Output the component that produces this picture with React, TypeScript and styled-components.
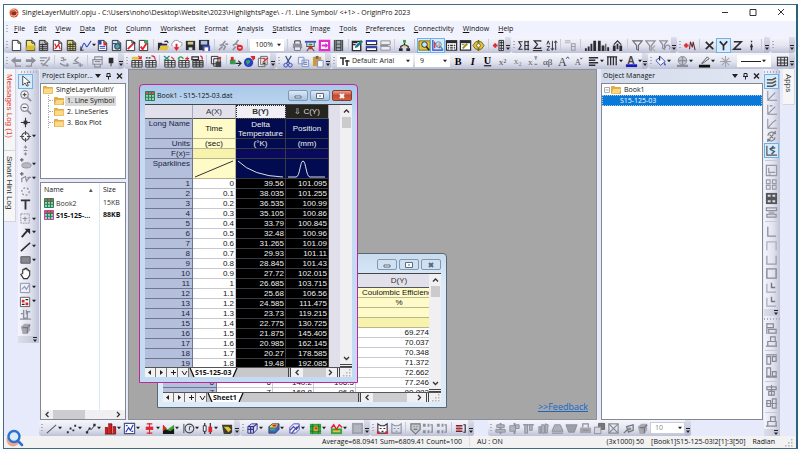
import React, { ReactNode } from "react";
import styled, { createGlobalStyle, css } from "styled-components";

const ui = `"Open Sans", "Noto Sans", sans-serif`;
const arial = `"Liberation Sans", Arial, sans-serif`;

const Global = createGlobalStyle`
  * { box-sizing: border-box; }
  html, body, #root { height: 100%; margin: 0; }
  body { background: #fdfdfd; font: 7px/10px ${ui}; color: #111; overflow: hidden; }
  button, select { font: inherit; color: inherit; border: 0; padding: 0; margin: 0; background: none; }
  table { border-collapse: separate; border-spacing: 0; }
  ul { list-style: none; margin: 0; padding: 0; }
`;

/* ---------- icon drawings, 14 x 14 grid ---------- */

const K = "#2b2b30";
const G = "#8d8f9b";
const R = "#e0252b";
const Y = "#e3c43c";
const B = "#2c3fc4";

const line = (d: string, c = K, w = 1.3) => <path d={d} stroke={c} strokeWidth={w} fill="none" />;
const fill = (d: string, c = K) => <path d={d} fill={c} />;
const page = (c = "#fff", s = K) => <path d="M2.5 1.5h6l3 3v8h-9z M8.5 1.5v3h3" fill={c} stroke={s} />;
const gridSheet = (c = K, f = "#fff") => (
  <>
    <path d="M2 6h11v7H2z" fill={f} stroke={c} />
    {line("M2 8.3h11M2 10.6h11M5.5 6v7M9.3 6v7", c, 1)}
  </>
);
const axes = (c = G) => line("M3 2v10h10M3 12l8-8", c, 1.1);

const art: Record<string, ReactNode> = {
  new: page(),
  folder: <>{page("#f4e36b")}{fill("M3 7h9l-1 5H2z", "#d9c12f")}</>,
  sheet: <>{page("#bbb")}{line("M3 6h8M3 8.300h8M3 10.500h8M6 5v7", K, 1)}</>,
  graph: <>{page()}{line("M4 5l2 4 2-3 2 5M4 11l5-6", R)}</>,
  matrix: <>{page("#dcd36a")}{line("M3 6h8M3 8h8M3 10.500h8M5.500 4v8M8.500 4v8", K, .9)}</>,
  wave: <>{line("M2 12l2-5c2-7 3 3 5 1l4-6", B, 1.1)}{line("M2 13V8M2 12h3", K, 1)}</>,
  layout: <>{page()}{fill("M3 2h3v4H3z", B)}{fill("M8 4h3v3H8z", R)}{line("M4 8h6M4 10h6", B, 1)}</>,
  notes: <>{page("#cfe3ea")}<circle cx="8" cy="8" r="3" fill="#4aa3b5" stroke={K} />{line("M3 5h4", B)}</>,
  pen: <>{page()}{line("M4 11l6-6", R, 2)}{line("M10 3l2 2", K, 1.6)}</>,
  check: <>{page()}{line("M4 8l2 3 4-6", R, 2)}{fill("M8 1h4v3H8z", "#3aa655")}</>,
  open: <>{fill("M1 4h4l1 1h5v2H4l-2 5H1z", K)}{fill("M4 7.500h9l-2 4.500H2z", Y)}{line("M8 3q3-2 4 1", K)}</>,
  cloud: <><path d="M3 8a2.500 2.500 0 010-4 4 4 0 017-1 2.500 2.500 0 011 5" fill="#fff" stroke={G} />{fill("M6 5h2v4h2l-3 4-3-4h2z", R)}</>,
  save: <>{fill("M2 2h10v10H2z", K)}{fill("M4 3h6v3H4z", "#c9cb7a")}{fill("M5 9h4v3H5z", "#ddd")}</>,
  saveAs: <>{fill("M1 1h11v11H1z", K)}{fill("M3 2h7v4H3z", "#a9c6e8")}{fill("M5 7h8v6H5z", "#3d4db5")}{fill("M7 9h4v4H7z", "#fff")}</>,
  run: <>{line("M9 2l-3 4 3 2-2 4M6 6L3 7M9 5l3 1M6 8l-4 4", G, 1.700)}</>,
  stop: <>{line("M8 1L5 5l3 2M5 5L2 7M5 8l-3 4", G, 1.700)}<circle cx="9.500" cy="9.500" r="3.300" fill={R} />{line("M8 9.500h3", "#fff")}</>,
  print: <>{fill("M2 5h10v5H2z", G)}{line("M4 5V2h6v3M4 9v3h6V9", K, 1)}{fill("M4 9h6v3H4z", "#e7e7ee")}</>,
  slide: <>{fill("M1 2h12v2H1z", "#3d4fc0")}{line("M3 4v4h8V4M7 8l-4 5M7 8l4 5", "#555", 1.100)}{fill("M5 5h4v2H5z", "#2f9a4f")}{fill("M5 8h4v3H5z", R)}</>,
  magenta: <><path d="M2 2h10v10H2z" fill="#fff" stroke="#e32cc9" strokeWidth="2.400" />{fill("M4 6h4V4l3 3-3 3V8H4z", "#e32cc9")}</>,
  film: <>{fill("M2 1h10v12H2z", "#3a3a3f")}{fill("M5 2h4v3H5zM5 6h4v3H5zM5 10h4v2H5z", "#9aa")}{line("M3.500 1v12M10.500 1v12", "#ccc", .6)}</>,
  edit: <><path d="M1.500 2.500h9v10h-9z" fill="#fff" stroke={K} strokeWidth="1.500" />{fill("M4 10l1-3 6-6 2 2-6 6z", "#1f7a86")}{line("M2 4h5M2 6h3", K)}</>,
  split: <><path d="M1.500 2h11v4h-11zM1.500 8.500h11v4h-11z" fill="#fff" stroke={K} strokeWidth="1.300" />{line("M1 2h12M1 9h12", B, 2)}</>,
  splitG: <><path d="M2 2h10v4H2zM2 8h10v4H2z" fill="#eee" stroke={G} />{line("M1 7h9", G, 1.500)}</>,
  tree: <>{line("M7 4v3M3 10V8l4-2 4 2v2", K)}{fill("M5.500 1h3v3h-3z", "#2e9e46")}{fill("M1 10h4v3H1zM9 10h4v3H9z", K)}{fill("M6 7h2v2H6z", Y)}</>,
  zoomPg: <>{fill("M1 2h12v10H1z", Y)}{line("M1 2h12v10H1z", "#776a1a", 1)}<circle cx="7" cy="6" r="3" fill="#bfe9f2" stroke={K} />{line("M9 8l3 4", K, 1.800)}</>,
  zoomGr: <>{line("M2 1v11h11", B)}{line("M4 10V4l3 4 2-4v6", R)}<circle cx="8" cy="6" r="3" fill="#d9f3fa99" stroke="#3b8fb5" />{line("M10 8l3 4", "#3b8fb5", 1.600)}</>,
  cal: <>{fill("M1 2h12v10H1z", "#fff")}{line("M1.500 2h11v10h-11z", K)}{fill("M1 1.500h12v3H1z", K)}{line("M3 7h8M3 9.500h8", K, 1.400)}<path d="M5 5v7M9 5v7" stroke="#fff" /></>,
  calPen: <>{fill("M1 2h12v10H1z", "#fff")}{line("M1.500 2h11v10h-11z", K)}{fill("M1 1.500h12v3H1z", K)}{line("M4 10l5-5", "#9a8f12", 2)}{line("M3 6h3", G)}</>,
  gear: <><path d="M1 7l3-4h6l3 4-3 4H4z" fill={Y} stroke="#6d6114" /><circle cx="7" cy="7" r="2" fill="#fff" stroke="#6d6114" />{line("M7 1v3M7 10v3", "#6d6114", 1.800)}</>,
  addCol: <>{line("M1 7h5M3.500 4.500v5", R, 2)}<path d="M7.500 1.500h5v11h-5z" fill="#ddd" stroke={K} />{line("M8 4h5M8 7h5M8 10h5M10 2v10", K, 1)}</>,
  sumCol: <>{line("M6 3H2l2.500 4L2 11h4", K, 1.200)}{line("M8 3h5M8 7h5M8 11h5M8.500 2v10M12 2v10", K, 1.200)}</>,
  sum: <>{line("M10.500 3V2h-7L7 6l-3.500 4h7V9", K, 1.300)}{line("M2 12.500h10", K, 1.200)}</>,
  sort: <>{line("M2 6l1.500-4L5 6M2 8h3l-3 4h3M8 2v10M6.500 10L8 12l1.500-2M11.500 12V2M10 4l1.500-2L13 4", K, 1)}</>,
  abc: <>{line("M1 2h6M1 4h6", "#b5b6c0", 1.200)}{line("M8 5h4v3H8zM8 8h4v4H8z", "#9a9ba5", 1.100)}</>,
  bars: fill("M1 10h2v3H1zM4 8h2v5H4zM7 5h2v8H7zM10 2h3v11h-3z"),
  bars2: fill("M1 2h3v11H1zM5 7h3v6H5zM9 5h1v8H9zM11 9h2v4h-2z"),
  bars3: <>{fill("M2 7h3v6H2zM6 5h2v6H6zM9 7h3v6H9z")}{line("M3 6l4-4 4 4", K, 1.200)}</>,
  funnel: line("M2 2h10L8 7v5l-2-1V7z", "#666872", 1.200),
  funnelX: <>{line("M2 2h10L8 7v5l-2-1V7z", G)}{line("M6 7l6 6M12 7l-6 6", "#aaa")}</>,
  funnelR: <>{line("M2 2h8L7 6v5l-2-1V6zM8 10a2.500 2.500 0 114 1", G)}</>,
  plusM: <>{line("M1 7h5M3.500 4.500v5", R, 2)}{line("M7 11l1-8 2 6 1-6 2 9", "#6a2328", 1.100)}</>,
  X: line("M3 3l8 8M11 3l-8 8", K, 1.800),
  Yl: line("M3 2.500L7 7l4-4.500M7 7v5", K, 1.800),
  Z: line("M3 3h8l-8 8h8", K, 1.700),
  i: line("M7 5v7M7 2v1.500M5.500 8h3", K, 1.500),
  back: <>{fill("M1 6l5-4v2.500h6v3H6V10z", G)}{line("M6 9v3h6", G)}</>,
  fwd: <>{fill("M13 6L8 2v2.500H2v3h6V10z", G)}{line("M8 9v3H2", G)}</>,
  sortX: line("M2 3h8M2 6h5M5 12l7-8M3 9l8 3M12 2v3", G, 1.400),
  ptA: line("M3 3h3v4M2 9l6 3M10 9v4M8 11h4M3 6l6-1", G, 1.400),
  ptB: line("M8 2L4 6l5 3M2 9h5M10 9v4M8 11h5", G, 1.400),
  prn2: <>{line("M2 5h10v5H2zM4 5V2h8v3M4 10v3h6v-3", G, 1.200)}{line("M4 7h6", G)}</>,
  pin: fill("M4 3h5v6H4zM6 9h1v3H6z"),
  tabA: <>{gridSheet()}{fill("M2 2h7v3H2z", Y)}{line("M9 1l3 3M12 1v3H9", R)}</>,
  tabB: <>{gridSheet()}{line("M2 3h2M5 3h2", K)}{line("M8 1q4 0 4 4", R)}</>,
  tabC: <>{gridSheet()}{line("M1 1l6 5M7 1L1 6", "#2d8d77", 1.400)}{line("M9 2l3 3", R)}</>,
  tabD: <>{gridSheet()}{line("M1 4q3-4 6 0M2 3v3", "#2e9e46", 1.400)}{line("M9 4h4M11 2v4", R)}</>,
  tabE: <>{gridSheet(K, "#bbb")}{line("M1 2h7v3H1z", K)}{line("M10 1q3 1 2 4", R)}</>,
  stack: <><path d="M1.500 1.500h7v8h-7z M4 4h7v8H4z" fill="#eee" stroke={K} />{fill("M6 7h6v6H6z", "#444")}{fill("M9 2h3v2H9z", R)}</>,
  out: <>{fill("M1 5h6v5H1z", "#2e9e46")}{line("M7 9h5M10 6l3 3-3 3", K, 1.200)}{fill("M2 2h3v4H2z", R)}</>,
  globe: <><circle cx="6" cy="8" r="5" fill={B} />{fill("M3 7q3-4 5 0l-3 4z", "#33a55c")}{fill("M8 1h5v3l-2 2z", R)}</>,
  pages: <><path d="M1.500 3.500h7v9h-7z M4 1.500h7v9H4z" fill="#f3f3f3" stroke="#666" />{line("M6 8l6-5M6 4h3", R, 1.200)}{line("M6 9h3", "#333")}</>,
  cut: <>{line("M5 9L10 1M8 9L4 1", "#3b4f7d", 1.300)}<circle cx="4" cy="11" r="2" fill="none" stroke={B} /><circle cx="9" cy="11" r="2" fill="none" stroke={B} /></>,
  copy: <><path d="M1.500 2.500h6v7h-6zM5.500 5.500h7v7h-7z" fill="#eaf0fb" stroke="#7c90c0" />{line("M7 8h4M7 10h4", "#7c90c0")}</>,
  paste: <>{fill("M1 2h9v10H1z", "#cf9a3d")}{fill("M4 1h3v3H4z", "#666")}<path d="M6 6h6v7H6z" fill="#f8f8ff" stroke="#7c90c0" /></>,
  bold: <text x="3" y="11" fontFamily="Liberation Serif" fontWeight="bold" fontSize="11">B</text>,
  italic: <text x="4" y="11" fontFamily="Liberation Serif" fontWeight="bold" fontStyle="italic" fontSize="11">I</text>,
  under: <text x="2" y="10" fontFamily="Liberation Serif" fontWeight="bold" fontSize="11" textDecoration="underline">U</text>,
  sup: <text x="2" y="11" fontFamily="Liberation Serif" fontSize="10" fill="#555">x²</text>,
  sub: <text x="2" y="10" fontFamily="Liberation Serif" fontSize="10" fill="#777">x₂</text>,
  both: <><text x="1" y="11" fontFamily="Liberation Serif" fontSize="10" fill="#666">x</text>{line("M8 2h3M8 10h3M9.500 2v3", "#888")}</>,
  greek: <text x="1" y="11" fontFamily="Liberation Serif" fontSize="10" fill="#444">αβ</text>,
  bigA: <><text x="1" y="12" fontFamily="Liberation Serif" fontSize="13" fill="#444">A</text>{line("M10 4l1.500-2L13 4", "#444", 1)}</>,
  smallA: <><text x="3" y="11" fontFamily="Liberation Serif" fontSize="9" fill="#555">A</text>{line("M9 3l1 1.500L11 3", "#555", 1)}</>,
  align: line("M2 3h10M2 5.700h7M2 8.400h10M2 11h7", K, 1.500),
  vlines: line("M2 2v9M5 2v9M8 2v9M11 2v9M1 2h11", K, 1.400),
  fontA: <><text x="2.500" y="10" fontFamily="Liberation Sans" fontWeight="bold" fontSize="11" fill="#444">A</text>{fill("M1 10h12v3H1z", "#1a1ab8")}</>,
  bucket: <><path d="M2 6l5-4 5 5-5 4z" fill="#f5f5f5" stroke={B} />{line("M6 1v5", K)}{fill("M11 7l2 4h-2z", B)}</>,
  shade: <><circle cx="7" cy="6" r="4.500" fill="#c3c4cc" stroke={G} />{line("M2 6h10M7 2v8", G)}{fill("M1 10.500h12v2.500H1z", G)}</>,
  pencil: <>{line("M4 9l6-7 2 2-7 5z", "#555", 1)}{fill("M1 10.500h12v3H1z", "#111")}</>,
  burst: line("M7 1v12M1 7h12M3 3l8 8M11 3l-8 8", "#a2a3ad", 1.200),
  table: line("M1.500 2.500h11v9h-11zM1 5.500h12M1 8.500h12M5.200 2v10M9 2v10", "#333", 1.100),
  pointer: <path d="M4 1v10l2.500-2.500L8.500 12l1.500-.7L8.500 8H12z" fill="#fff" stroke="#444" />,
  zin: <><circle cx="6" cy="6" r="4" fill="#f8f8f8" stroke={G} strokeWidth="1.400" />{line("M9 9l4 4", G, 2)}{line("M4 6h4M6 4v4", "#555")}</>,
  zout: <><circle cx="6" cy="6" r="4" fill="#f8f8f8" stroke={G} strokeWidth="1.400" />{line("M9 9l4 4", G, 2)}{line("M4 6h4", "#555")}</>,
  cross: <>{line("M7 2v10M2 7h10", "#333", 1.200)}{fill("M5 5h4v4H5z", "#333")}</>,
  target: <><circle cx="7" cy="7" r="4" fill="none" stroke="#444" strokeWidth="1.200" />{line("M7 1v12M1 7h12", "#444", 1)}<circle cx="7" cy="7" r="1.500" fill="#fff" /></>,
  updn: fill("M7 1l2 3H7.500v1h-1V4H5zM7 13l2-3H7.500V9h-1v1H5zM5 6.500h4v1H5z", G),
  blob: <>{line("M3 1v4M1 3h4", "#666")}<ellipse cx="8" cy="9" rx="5" ry="2.800" fill="#b7b9c2" stroke={G} /></>,
  curve: <>{line("M3 1v4M1 3h4", "#666")}{line("M3 12V8l4-2 1 5 4-5M9 7h4", G)}</>,
  dots: <circle cx="7" cy="7" r="4" fill="none" stroke={G} strokeDasharray="2 2" strokeWidth="1.400" />,
  T: line("M2 2.500h10M7 2.500v10", "#333", 2),
  region: <><path d="M2 2h9v10H2z" fill="none" stroke={G} strokeDasharray="2 1" />{line("M4 7h5M6.500 5v5", G)}</>,
  arrow: <>{line("M3 12l6-7", K, 2)}{fill("M6 3h6v6z", K)}</>,
  lineT: line("M2 12L12 3", K, 1.700),
  rect: <path d="M2 4h10v7H2z" fill="#868793" stroke="#555" />,
  hand: <path d="M4 7V3h1.500V2H7V1.500h1.500V3H10v1h1.500v5L9 12.500H5L2 8z" fill="#fff" stroke="#333" strokeWidth="1.200" />,
  pic: <><path d="M1.500 2.500h10v10h-10z" fill="#eef" stroke={G} />{line("M3 9l3-3 2 3 3-5", "#8aa0b5")}</>,
  picR: <><path d="M1.500 2.500h10v10h-10z" fill="#fff" stroke="#555" />{fill("M3 5h3v3H3zM7 8h3v3H7z", R)}{line("M7 5h3M3 10h3", "#222")}</>,
  handG: line("M2 6h3v5h4V4h3M5 2v4M8 2v5M1 12h12", G, 1.500),
  cube: <>{fill("M2 5l4-3h6v7l-3 4H4z", "#a6a7b0")}{line("M4 6h5v6M9 6l3-3", "#777")}</>,
  scatter: fill("M2 10h2v2H2zM5 6h2v2H5zM8 8h2v2H8zM10 3h2v2h-2z"),
  lineSym: <>{line("M3 11l3-4 2 1 4-5", K, 1)}{fill("M2 10h2.500v2.500H2zM5 6h2v2H5zM10 2h2.500v2.500H10z")}</>,
  thin: line("M2 12L12 3", "#555", 1.100),
  redBar: <>{fill("M1 6h3v7H1zM4.500 2h4v11h-4zM9.500 5h3v8h-3z", "#d21c1c")}{line("M1 6h3v7M4.500 2h4v11M9.500 5h3v8H1", "#5a0b0b", .8)}</>,
  scMat: <><path d="M1.500 1.500h11v11h-11z" fill="#fff" stroke="#4a5380" strokeWidth="1.200" />{line("M3 11l3-5 2 3 3-6M3 4h2M9 10h2", B)}</>,
  box: <>{line("M7 1v12M4 2h6M4 12h6", R, 1.200)}{fill("M3 5h8v3.500H3z", R)}</>,
  area: <>{fill("M1 3l5 5 3-2 4-3v10H1z", "#3c9f2c")}{fill("M1 7l5 2 3 1 4-3v6H1z", "#161616")}{fill("M1 3l4 4-4 3z", R)}</>,
  polar: <><circle cx="8" cy="7" r="4.700" fill="none" stroke="#444" strokeWidth="1.200" />{line("M2 2v10M8 9V5h2", "#444", 1)}</>,
  candle: <>{line("M4 1v12M10 1v12", K)}<path d="M2.500 4h3v6h-3z" fill="#fff" stroke={K} />{fill("M8 5h4v6H8z", R)}</>,
  tmpl: <>{fill("M1 3h11v8l-2 2H3z", "#3e3e2a")}{fill("M3 5h5l3 3-3 3z", Y)}</>,
  cube3: <><path d="M2 5l4-3h6v6l-4 4H2z" fill="#dcdcf4" stroke="#33348a" />{line("M2 5h6v7M8 5l4-3M5 5v7M2 8h6", "#33348a")}</>,
  surf: <>{fill("M2 5l4-3h7v6l-4 4H2z", "#3b5fd1")}{fill("M3 4l3-2h6l-2 4H3z", "#f0dd3c")}{fill("M6 3h4v2H6z", R)}{fill("M3 7h6v2H3z", "#41b347")}{line("M2 5l4-3h7v6l-4 4H2z", "#333", .8)}</>,
  wire: <><path d="M2 6l4-4h6v6l-4 4H2z" fill="#eeeefc" stroke="#4448aa" />{line("M2 9l4-4 3 3 3-4M4 12l6-7", "#4448aa")}</>,
  heat: <>{fill("M1 2h12v11H1z", "#32a53e")}{fill("M5 4h5v6H5z", Y)}{fill("M6 6h3v2H6z", R)}{line("M4 2v11M10 2v11M1 5h12M1 10h12", "#195e22", .6)}</>,
  heat2: <>{fill("M1 7h12v6H1z", "#32a53e")}{line("M1 7l3-4 3 5 3-5 3 3", R, 1.500)}{fill("M3 9h8v2H3z", Y)}</>,
  img: <>{fill("M1 1h12v12H1z", "#9ea0ac")}{fill("M3 3h8v8H3z", "#b3b5bf")}</>,
  mask: <><path d="M2 2l3 2h4l3-2v10H2z" fill="#fff" stroke={K} strokeWidth="1.200" />{line("M4 7h2M8 7h2M6 10h2", K)}{fill("M1 10h3v3H1zM10 10h3v3h-3z", R)}</>,
  maskG: <>{line("M2 2l3 2h4l3-2v10H2zM4 7h2M8 7h2M6 10h2", G, 1.200)}</>,
  shield: <path d="M2 2h10v6l-5 5-5-5z M5 5h1M8 5h1M5 8h4" fill="#c6c7d0" stroke="#777" strokeWidth="1.200" />,
  nodes: <>{fill("M1 2h3v3H1zM1 9h3v3H1zM6 2h2v3H6zM6 9h2v3H6z", G)}{line("M9 3h2v8H9", G, 1.400)}</>,
  redLines: <>{line("M1 4h7M1 7h7M1 10h7", "#70242a", 1.600)}{line("M9 3h2v8H9", K, 1.200)}{fill("M2 6h4v2H2z", R)}</>,
  al1: <>{fill("M6 1h2v12H6z", G)}<path d="M3 3h8v3H3zM2 8h10v3H2z" fill="#b4b5be" stroke={G} /></>,
  al2: <>{fill("M6 1h2v12H6z", G)}<path d="M2 4h6v6H2zM8 3h4v4H8z" fill="#b4b5be" stroke={G} /></>,
  al3: <>{line("M1 3h12", G)}<path d="M3 3h3v9H3zM8 3h3v6H8z" fill="#b4b5be" stroke={G} /></>,
  al4: <path d="M2 5h2v7H2zM5 3h3v9H5zM9 2l3 1-1 9H9z" fill="#b4b5be" stroke={G} />,
  trap: <><path d="M4 3h6l3 7H1z" fill="#b0b1ba" stroke={G} />{line("M1 12h12", G)}</>,
  trap2: <path d="M1 3h12l-3 8H4z" fill="#9d9ea8" stroke={G} />,
  cabinet: <>{fill("M1 6h12v6H1z", "#a4a5af")}{line("M4 6V2h6v4M4 9h6", G)}</>,
  over: <><path d="M6 1.500h6.500V8H6z" fill="#777" stroke="#666" /><path d="M1.500 5.500h7v7h-7z" fill="#d4d5dd" stroke={G} /></>,
  fit: <>{line("M2 2h10v10H2z", G)}{line("M2 2l10 10M12 2L2 12", "#888")}</>,
  front: <>{line("M2 12l5-5M5 5l7-2v6l-5 2z", "#777", 1.400)}{fill("M6 6h4v3H6z", G)}</>,
  ax1: axes(),
  ax2: <>{axes()}{line("M5 3h3", G)}</>,
  ax3: <>{line("M3 2v10h10M3 12l5-6 4-3", G, 1.100)}</>,
  swap: <>{line("M3 6a4.500 4.500 0 018-2M11 8a4.500 4.500 0 01-8 2M11 1v3H8M3 13v-3h3M5 5l4 4M9 5L5 9", "#777", 1.200)}</>,
  speed: <>{line("M2 2v10h11", "#555")}{line("M9 2l-3 4 4 2-3 3M5 5l6-1", "#445c74", 1.600)}</>,
  layers: <>{line("M2 5h6l4-2M2 8.500h6l4-2M2 12h6l4-2", "#555", 1.600)}</>,
  frame: line("M1.500 1.500h11v11h-11zM4 4v5h7M4 11h2", "#999aa5", 1.300),
  four: line("M1.500 2h4v4h-4zM8 2h4v4H8zM1.500 8h4v4h-4zM8 8h4v4H8z", "#9a9ba6", 1.200),
  fourK: <>{fill("M1 1h12v12H1z", "#55565c")}{fill("M3 3h3v2H3zM8 3h3v2H8zM3 9h3v2H3zM8 9h3v2H8z", "#ddd")}</>,
  mix: <>{line("M1.500 2h11v3h-11zM2 9h10v3H2z", "#8e8f9a", 1.300)}{fill("M4 6h6v4H4z", "#aaabb5")}</>,
  L: line("M3 2v10h9", G, 1.400),
  Lt: line("M2 12V3h10v9", "#b0b1bc", 1.400),
  U: line("M2 3v9h10V3", "#9d9ea9", 1.400),
  sq: line("M2 2h10v10H2z", "#888994", 1.500),
  inner: <>{line("M2 3v9h10", "#a8a9b4")}{line("M7 2v5h4", "#777", 1.500)}</>,
  g1: line("M2 2h7v4H2zM4 8h8v4H4zM2 1v12", "#888994", 1.300),
  g2: line("M3 7h9v5H3zM6 2h5v5H6zM1 12h12", "#888994", 1.300),
  g3: line("M1 2h12M2 4h4v8H2zM8 4h4v5H8z", "#888994", 1.300),
  g4: line("M1 12h12M2 2h4v9H2zM8 6h4v5H8z", "#888994", 1.300),
  g5: line("M2 3h10v3H2zM4 8h6v4H4zM7 1v12", "#888994", 1.300),
  g6: line("M2 4h4v6H2zM8 2h4v10H8zM1 7h12", "#888994", 1.300),
};

const Icon = ({ name }: { name: string }) => (
  <svg width="13" height="13" viewBox="0 0 14 14" aria-hidden="true">{art[name]}</svg>
);

/* ---------- toolbars ---------- */

const Band = styled.div<{ $w?: number }>`
  display: flex;
  align-items: stretch;
  flex: 0 1 ${p => (p.$w ? `${p.$w}px` : "auto")};
  height: 16px;
  min-width: 0;
  border-radius: 3px;
  background: linear-gradient(#f5f6fc, #e2e4f0 55%, #bdc1d4);
`;
const Grip = styled.i<{ $flat?: boolean }>`
  flex: none;
  width: ${p => (p.$flat ? "16px" : "2px")};
  height: ${p => (p.$flat ? "2px" : "auto")};
  margin: ${p => (p.$flat ? "2px auto 1px" : "4px 2px")};
  background: ${p => p.$flat
    ? "repeating-linear-gradient(90deg, #aaaebf 0 1px, transparent 1px 3px)"
    : "repeating-linear-gradient(#aaaebf 0 1px, transparent 1px 3px)"};
`;
const Items = styled.div`
  flex: 1;
  display: flex;
  align-items: center;
  justify-content: space-between;
  min-width: 0;
`;
const More = styled.button`
  flex: none;
  width: 6px;
  display: flex;
  align-items: flex-end;
  justify-content: center;
  padding-bottom: 3px;
  border-radius: 0 3px 3px 0;
  background: linear-gradient(#dcdeea, #b4b7ce);
`;
const Rule = styled.i<{ $flat?: boolean }>`
  flex: none;
  ${p => p.$flat
    ? css`height: 1px; width: 12px; margin: 2px 0;`
    : css`width: 1px; height: 12px; margin: 0 2px;`}
  background: #c6c9d9;
`;
const Tool = styled.button<{ $on?: boolean }>`
  flex: none;
  display: flex;
  align-items: center;
  svg { display: block; }
  ${p => p.$on && css`background: #d8ebfb; box-shadow: 0 0 0 1px #6cb2ea;`}
`;
const Combo = styled.label<{ $w: number; $dim?: boolean }>`
  flex: none;
  display: flex;
  align-items: center;
  width: ${p => p.$w}px;
  height: 12px;
  padding: 0 2px;
  background: #fff;
  color: ${p => (p.$dim ? "#888" : "#222")};
  border: 1px solid ${p => (p.$dim ? "#c9ccda" : "#fff")};
  select { appearance: none; flex: 1; min-width: 0; line-height: 10px; height: 10px; outline: 0; padding-left: 2px; }
`;

const Caret = ({ w = 5 }: { w?: number }) => (
  <svg width={w} height="4" viewBox="0 0 5 4" aria-hidden="true"><path d="M0 .500h5L2.500 3.500z" fill="#222" /></svg>
);
const Dots = () => (
  <svg width="4" height="5" viewBox="0 0 4 5" aria-hidden="true"><path d="M0 0h4v1H0zM0 2.500h4L2 5z" fill="#222" /></svg>
);

/* "name" draws an icon, "name>" adds a menu arrow, "name*" is switched on, "|" is a rule */
const Tools = ({ list, flat }: { list: string; flat?: boolean }) => (
  <>
    {list.split(" ").map((t, i) => {
      if (t === "|") return <Rule key={i} $flat={flat} />;
      const name = t.replace(/[>*]/g, "");
      return (
        <Tool key={i} type="button" aria-label={name} $on={t.endsWith("*")}>
          <Icon name={name} />
          {t.endsWith(">") && <Caret w={4} />}
        </Tool>
      );
    })}
  </>
);
const Bar = ({ w, list, children }: { w?: number; list?: string; children?: ReactNode }) => (
  <Band $w={w} role="toolbar">
    <Grip />
    <Items>{list && <Tools list={list} />}{children}</Items>
    <More type="button" aria-label="More"><Dots /></More>
  </Band>
);
const Select = ({ w, value, label, dim, icon }: { w: number; value: string; label: string; dim?: boolean; icon?: ReactNode }) => (
  <Combo $w={w} $dim={dim}>
    {icon}
    <select aria-label={label} defaultValue={value}><option>{value}</option></select>
    <Caret w={4} />
  </Combo>
);

/* ---------- application frame ---------- */

const Frame = styled.main`
  height: calc(100vh - 8px);
  margin: 4px 2px 4px 3px;
  display: flex;
  flex-direction: column;
  background: #e7eafb;
  border: 1px solid #426b80;
  border-right: 2px solid #2e6078;
  position: relative;
`;
const TitleBar = styled.header`
  flex: none;
  display: flex;
  align-items: center;
  height: 16px;
  padding: 0 9px 0 5px;
  gap: 3px;
  background: #fff;
  h1 { flex: 1; margin: 0; font: inherit; white-space: nowrap; }
  button { width: 12px; height: 12px; margin-left: 16px; }
  svg { display: block; }
`;
const MenuBar = styled.nav`
  flex: none;
  display: flex;
  align-items: center;
  height: 16px;
  gap: 9px;
  padding-right: 10px;
  background: #f0f2fd;
  button { white-space: nowrap; }
  button::first-letter { text-decoration: underline; }
`;
const MenuGrip = styled.i`
  width: 2px;
  height: 9px;
  margin: 0 -3px 0 2px;
  background: repeating-linear-gradient(#b4b8c8 0 1px, transparent 1px 3px);
`;
const ToolRow = styled.div`
  flex: none;
  display: flex;
  height: 16px;
`;
const Body = styled.div`
  flex: 1;
  min-height: 0;
  display: flex;
`;
const SideTabs = styled.div<{ $right?: boolean }>`
  flex: none;
  width: ${p => (p.$right ? "16px" : "14px")};
  padding-left: ${p => (p.$right ? "3px" : "0")};
  display: flex;
  flex-direction: column;
`;
const SideTab = styled.button<{ $red?: boolean }>`
  writing-mode: vertical-rl;
  width: 12px;
  padding: 5px 0 12px;
  text-align: left;
  font: 8px/11px ${arial};
  color: ${p => (p.$red ? "#e5322d" : "#333")};
  background: #f6f6f6;
  border-bottom: 1px solid #d4d5de;
  border-right: 1px solid #d4d5de;
  white-space: nowrap;
`;
const ToolColumn = styled.div<{ $w: number; $h?: number }>`
  flex: none;
  width: ${p => p.$w}px;
  height: ${p => (p.$h ? `${p.$h}px` : "auto")};
  display: flex;
  flex-direction: column;
  background: linear-gradient(90deg, #f4f5fc, #dfe1ee 60%, #bfc3d6);
  border-radius: 3px;
`;
const ColumnItems = styled.div<{ $n: number }>`
  flex: ${p => p.$n};
  display: flex;
  flex-direction: column;
  justify-content: space-between;
  align-items: flex-start;
  padding: 1px 0 1px 1px;
`;
const ColumnEnd = styled.button`
  height: 7px;
  display: flex;
  justify-content: flex-end;
  align-items: center;
  padding-right: 2px;
  background: linear-gradient(90deg, #dcdeea, #c0c3d8);
`;
const Middle = styled.div`
  flex: 1;
  min-width: 0;
  display: flex;
  flex-direction: column;
`;
const Workspace = styled.div`
  flex: 1;
  min-height: 0;
  display: flex;
`;
const Dock = styled.section<{ $w: number; $right?: boolean }>`
  flex: none;
  width: ${p => p.$w}px;
  display: flex;
  flex-direction: column;
  padding: ${p => (p.$right ? "0 1px 0 4px" : "0 2px 0 1px")};
`;
const DockHead = styled.header`
  display: flex;
  align-items: center;
  flex: none;
  height: 14px;
  padding: 0 3px 0 2px;
  background: linear-gradient(90deg, #d3dbea, #e2e6f4);
  h2 { flex: 1; margin: 0; font: inherit; white-space: nowrap; }
  svg { display: block; }
`;
const Pane = styled.div<{ $h?: number }>`
  flex: ${p => (p.$h ? `0 0 ${p.$h}px` : "1")};
  min-height: 0;
  display: flex;
  flex-direction: column;
  background: #fff;
  border: 1px solid #84878f;
  & + & { margin-top: 3px; }
`;
const Tree = styled.ul`
  padding: 0 2px;
`;
const Leaf = styled.li<{ $in?: boolean }>`
  display: flex;
  align-items: center;
  height: 11px;
  gap: 1px;
  ${p => p.$in && css`
    margin-left: 5px;
    border-left: 1px dotted #aaa;
    &::before { content: ""; width: 4px; border-top: 1px dotted #aaa; }
  `}
  svg { flex: none; display: block; }
`;
const LeafName = styled.button<{ $sel?: boolean }>`
  padding: 0 2px;
  white-space: nowrap;
  background: ${p => (p.$sel ? "#d9d9d9" : "none")};
`;
const Files = styled.table`
  width: 100%;
  flex: 1;
  table-layout: fixed;
  th, td { text-align: left; padding: 0 0 0 3px; font-weight: 400; height: 12px; white-space: nowrap; overflow: hidden; vertical-align: middle; }
  th:first-child, td:first-child { border-right: 1px solid #dbe9f8; }
  th { height: 14px; }
  svg { vertical-align: -2px; margin-right: 2px; }
`;
const FileRow = styled.tr<{ $bold?: boolean }>`
  td { font-weight: ${p => (p.$bold ? 700 : 400)}; color: ${p => (p.$bold ? "#111" : "#333")}; }
`;
const Filler = styled.tr`
  td { height: 100%; }
`;
const SortMark = styled.span`
  float: right;
  margin-right: 6px;
  color: #555;
`;
const Selected = styled.button`
  height: 11px;
  padding-left: 18px;
  text-align: left;
  background: #0a78d7;
  color: #fff;
  outline: 1px dotted #9cc8ee;
  outline-offset: -1px;
`;
const Desktop = styled.section`
  flex: 1;
  position: relative;
  min-width: 0;
  overflow: hidden;
  background: #a6a6a6;
  border: 1px solid #8d8f96;
`;
const Feedback = styled.a`
  position: absolute;
  right: 8px;
  bottom: 6px;
  font-size: 9px;
  line-height: 12px;
  color: #1767c9;
`;
const StatusBar = styled.footer`
  flex: none;
  height: 12px;
  display: flex;
  align-items: center;
  padding: 0 2px 0 318px;
  gap: 7px;
  background: #f2f2f3;
  white-space: nowrap;
  b { flex: 1; }
`;
const Sep = styled.i`
  width: 1px;
  height: 10px;
  background: #dedee2;
`;
const Lens = styled.button`
  position: absolute;
  left: 1px;
  bottom: 1px;
  svg { display: block; }
`;
const Spacer = styled.i`
  width: 14px;
`;

/* ---------- book windows ---------- */

const Win = styled.article<{ $x: number; $y: number; $w: number; $h: number; $active?: boolean }>`
  position: absolute;
  left: ${p => p.$x}px;
  top: ${p => p.$y}px;
  width: ${p => p.$w}px;
  height: ${p => p.$h}px;
  display: flex;
  flex-direction: column;
  padding: 0 5px 5px;
  border-radius: 4px 4px 0 0;
  border: ${p => (p.$active ? "1px solid #c0259a" : "1px solid #5c6672")};
  background: ${p => (p.$active ? "linear-gradient(#a9c8e8, #c3dbf3 30px)" : "linear-gradient(#c9dcef, #dcebfa 30px)")};
`;
const WinTitle = styled.header`
  flex: none;
  height: 19px;
  display: flex;
  align-items: center;
  justify-content: flex-end;
  gap: 2px;
  padding-top: 2px;
  h3 { flex: 1; margin: 0; font: inherit; white-space: nowrap; }
`;
const WinButton = styled.button<{ $close?: boolean; $dim?: boolean }>`
  width: 20px;
  height: 11px;
  display: flex;
  align-items: center;
  justify-content: center;
  border: 1px solid ${p => (p.$close ? "#8c3a2c" : "#8098b2")};
  border-radius: 2px;
  background: ${p => (p.$close ? "linear-gradient(#e6a292, #c9492f 50%, #d0603f)" : p.$dim ? "#cfe0f0" : "linear-gradient(#dce9f7, #a8c2de)")};
`;
const Client = styled.div`
  flex: 1;
  min-height: 0;
  display: flex;
  background: #e1dfe9;
  border-top: 1px solid #444;
`;
const Grid = styled.div`
  flex: 1;
  min-width: 0;
  overflow: hidden;
  background: #e1dfe9;
`;
const Sheet = styled.table`
  table-layout: fixed;
  width: 0;
  font: 8px/9px ${arial};
  th, td {
    height: 10px;
    padding: 0 1px;
    border-right: 1px solid #a5a9ba;
    border-bottom: 1px solid #a5a9ba;
    text-align: right;
    font-weight: 400;
    white-space: nowrap;
    overflow: hidden;
  }
  tbody th { background: #b4bfdc; color: #1e2540; border-color: #6e7690; padding-right: 2px; }
  svg { display: block; }
`;
type Kind = "note" | "note2" | "navy" | "navy2" | "black" | "plain";
const tone: Record<Kind, string> = {
  note: "#fffbc9", note2: "#f7f2ac", navy: "#020b50", navy2: "#0a0a5c", black: "#000", plain: "#fff",
};
const Cell = styled.td<{ $k: Kind }>`
  && {
    background: ${p => tone[p.$k]};
    ${p => (p.$k === "navy" || p.$k === "navy2" || p.$k === "black") && css`color: #eee; border-color: #3a3a42;`}
    ${p => p.$k !== "black" && p.$k !== "plain" && css`text-align: center;`}
    ${p => p.$k === "plain" && css`border-color: #c9c9cf;`}
    ${p => (p.$k === "note" || p.$k === "note2") && css`border-color: #b9b58e;`}
  }
`;
const Inset = styled(Cell)`
  && { padding-right: 13px; }
`;
const ColHead = styled.th<{ $mode?: "sel" | "dark" }>`
  && {
    height: 14px;
    text-align: center;
    background: ${p => (p.$mode === "dark" ? "#26241f" : "#e2e0ea")};
    color: ${p => (p.$mode === "dark" ? "#ddd" : "#333")};
    font-weight: ${p => (p.$mode === "sel" ? 700 : 400)};
    border-bottom-color: #555;
    ${p => p.$mode === "sel" && css`outline: 1px dotted #222; outline-offset: -1px; background: #f0eff5;`}
  }
`;
const TallRow = styled.tr`
  && th, && td { height: 20px; }
  && th { vertical-align: top; }
`;
const VScroll = styled.div`
  flex: none;
  width: 12px;
  display: flex;
  flex-direction: column;
  align-items: center;
  padding: 3px 0 2px;
  background: #f0f0f2;
  border-bottom: 3px double #444;
  i { width: 9px; height: 11px; margin: 2px 0 auto; background: #cbcbcd; }
`;
const HScroll = styled.div<{ $w?: number; $thumb: number }>`
  flex: ${p => (p.$w ? `0 0 ${p.$w}px` : "none")};
  height: 9px;
  display: flex;
  align-items: center;
  padding: 0 3px;
  background: #f0f0f2;
  i { width: ${p => p.$thumb}px; height: 9px; margin: 0 auto 0 2px; background: #cdcdcf; }
`;
const Foot = styled.div`
  flex: none;
  height: 10px;
  display: flex;
  background: #c8c8ca;
  border-top: 1px solid #555;
`;
const FootButton = styled.button`
  width: 11px;
  display: flex;
  align-items: center;
  justify-content: center;
  background: #f2f2f2;
  border-right: 1px solid #777;
`;
const FootTab = styled.button`
  display: flex;
  font-weight: 700;
  color: #111;
  background: #fff;
  line-height: 9px;
  svg { display: block; }
`;
const FootGap = styled.i`
  flex: 1;
  border-right: 3px double #444;
`;
const FootStop = styled.i`
  width: 3px;
  background: #f0f0f2;
  border-right: 3px double #444;
`;
const Corner = styled.span`
  width: 12px;
  background: #f0f0f2;
  svg { display: block; }
`;

const Chevron = ({ d }: { d: "u" | "d" | "l" | "r" }) => {
  const path = { u: "M1 4.500L3.500 2 6 4.500", d: "M1 2l2.500 2.500L6 2", l: "M4.500 1L2 3.500 4.500 6", r: "M2 1l2.500 2.500L2 6" }[d];
  return <svg width="7" height="7" viewBox="0 0 7 7" aria-hidden="true"><path d={path} fill="none" stroke="#333" strokeWidth="1.300" /></svg>;
};
const BookIcon = ({ edge = "#2c7c5b" }: { edge?: string }) => (
  <svg width="10" height="10" viewBox="0 0 10 10" aria-hidden="true">
    <path d="M.500.500h9v9h-9z" fill="#8ed7ae" stroke={edge} />
    <path d="M1 1h8v2H1z" fill="#d2574b" />
    <path d="M1 3.500h8M1 6.300h8M3.500 1v8M6.500 1v8" stroke="#2c7c5b" fill="none" />
  </svg>
);
const FolderIcon = ({ open }: { open?: boolean }) => (
  <svg width="10" height="9" viewBox="0 0 10 9" aria-hidden="true">
    <path d="M.500 1.500h3l1 1h5v6h-9z" fill="#e8ae3c" stroke="#c98f26" strokeWidth=".6" />
    <path d={open ? "M2.500 4h7.500L8 8.500H.500z" : "M1 3.500h8.500v5H1z"} fill="#fbd985" />
  </svg>
);
const SizeGrip = () => (
  <svg width="12" height="9" viewBox="0 0 12 9" aria-hidden="true">
    <path d="M9 1h1.500v1.500H9zM9 4h1.500v1.500H9zM6 4h1.500v1.500H6zM9 7h1.500v1.500H9zM6 7h1.500v1.500H6zM3 7h1.500v1.500H3z" fill="#b4b4b8" />
  </svg>
);
const HeadTools = () => (
  <svg width="29" height="8" viewBox="0 0 29 8" aria-label="Panel controls">
    <path d="M1 2h6L4 6z" fill="#222" />
    <path d="M13 1.500h3v3h-3zM12 4.500h5M14.500 5v2.500" fill="none" stroke="#222" />
    <path d="M23 1.500l5 5M28 1.500l-5 5" stroke="#222" strokeWidth="1.400" />
  </svg>
);
const WinButtons = ({ dim }: { dim?: boolean }) => (
  <>
    {["M3 4h6v2H3z", "M2.500 1.500h7v5h-7z M5 4h2", "M4 2l4 4M8 2L4 6"].map((d, i) => (
      <WinButton key={i} type="button" aria-label={["Minimize", "Maximize", "Close"][i]} $close={i === 2 && !dim} $dim={dim}>
        <svg width="12" height="8" viewBox="0 0 12 8"><path d={d} fill={i === 2 ? "none" : "#fff"} stroke={i === 2 && !dim ? "#fff" : "#5c6c80"} strokeWidth={i === 2 ? 2 : 1} /></svg>
      </WinButton>
    ))}
  </>
);
const Footer = ({ tab, scroll, thumb }: { tab: string; scroll: number; thumb: number }) => (
  <Foot>
    {["M5 1v5L2 3.500z", "M3 1v5l3-2.500z", "M3 3.500h5M5.500 1v5", "M3 2l2.500 4L8 2"].map((d, i) => (
      <FootButton key={d} type="button" aria-label={["Previous", "Next", "Add", "List"][i]}>
        <svg width="9" height="7" viewBox="0 0 9 7"><path d={d} fill={i < 2 ? "#222" : "none"} stroke="#222" strokeWidth={i < 2 ? 0 : 1} /></svg>
      </FootButton>
    ))}
    <FootTab type="button">
      <svg width="6" height="9" viewBox="0 0 6 9"><path d="M0 0v9h5z" fill="#c8c8ca" /><path d="M1 0l4 9" stroke="#111" strokeWidth="1.300" /></svg>
      {tab}
      <svg width="7" height="9" viewBox="0 0 7 9"><path d="M7 0v9H2L6 0z" fill="#c8c8ca" /><path d="M6 0L2 9" stroke="#111" strokeWidth="1.300" /></svg>
    </FootTab>
    <FootGap />
    <HScroll $w={scroll} $thumb={thumb}><Chevron d="l" /><i /><Chevron d="r" /></HScroll>
    <FootStop />
    <Corner><SizeGrip /></Corner>
  </Foot>
);

const temps = ["39.56", "38.035", "36.535", "35.105", "33.79", "32.48", "31.265", "29.93", "28.845", "27.72", "26.685", "25.68", "24.585", "23.73", "22.775", "21.875", "20.985", "20.27", "19.48"];
const positions = ["101.095", "101.255", "100.99", "100.86", "100.845", "100.96", "101.09", "101.11", "101.43", "102.015", "103.715", "106.56", "111.475", "119.215", "130.725", "145.405", "162.145", "178.585", "192.085"];
const cycles: string[][] = [
  ["", "", "", "", "69.274"],
  ["", "", "", "", "70.037"],
  ["", "", "", "", "70.348"],
  ["", "", "", "", "71.372"],
  ["", "", "", "", "72.662"],
  ["6", "6", "140.2", "106.5", "77.246"],
  ["7", "7", "168.8", "96.8", "80.882"],
];

const FrontBook = () => (
  <Win $x={10} $y={14} $w={219} $h={299} $active>
    <WinTitle><BookIcon /><h3>Book1 - S15-125-03.dat</h3><WinButtons /></WinTitle>
    <Client>
      <Grid>
        <Sheet>
          <colgroup><col width="48" /><col width="43" /><col width="50" /><col width="43" /></colgroup>
          <thead>
            <tr><ColHead /><ColHead>A(X)</ColHead><ColHead $mode="sel">B(Y)</ColHead><ColHead $mode="dark">⇩ C(Y)</ColHead></tr>
          </thead>
          <tbody>
            <TallRow><th>Long Name</th><Cell $k="note">Time</Cell><Cell $k="navy">Delta<br />Temperature</Cell><Cell $k="navy">Position</Cell></TallRow>
            <tr><th>Units</th><Cell $k="note">(sec)</Cell><Cell $k="navy">(°K)</Cell><Cell $k="navy">(mm)</Cell></tr>
            <tr><th>F(x)=</th><Cell $k="note2" /><Cell $k="navy2" /><Cell $k="navy2" /></tr>
            <TallRow>
              <th>Sparklines</th>
              <Cell $k="note"><svg width="40" height="18" viewBox="0 0 40 18"><path d="M1 17L39 1" stroke="#333" /></svg></Cell>
              <Cell $k="navy"><svg width="47" height="18" viewBox="0 0 47 18"><path d="M1 1Q16 16 46 17" stroke="#ddd" fill="none" /></svg></Cell>
              <Cell $k="navy"><svg width="40" height="18" viewBox="0 0 40 18"><path d="M1 17h8c4 0 4-16 7-16s3 16 7 16h15" stroke="#ddd" fill="none" /></svg></Cell>
            </TallRow>
            {temps.map((t, i) => (
              <tr key={i}><th>{i + 1}</th><Cell $k="plain">{i / 10}</Cell><Cell $k="black">{t}</Cell><Cell $k="black">{positions[i]}</Cell></tr>
            ))}
          </tbody>
        </Sheet>
      </Grid>
      <VScroll><Chevron d="u" /><i /><Chevron d="d" /></VScroll>
    </Client>
    <Footer tab="S15-125-03" scroll={46} thumb={23} />
  </Win>
);

const BackBook = () => (
  <Win $x={28} $y={183} $w={290} $h={155}>
    <WinTitle><WinButtons dim /></WinTitle>
    <Client>
      <Grid>
        <Sheet>
          <colgroup><col width="54" /><col width="56" /><col width="41" /><col width="42" /><col width="87" /></colgroup>
          <thead><tr><ColHead /><ColHead /><ColHead /><ColHead /><ColHead>D(Y)</ColHead></tr></thead>
          <tbody>
            {["Coulombic Efficiency", "%", "", ""].map((t, i) => (
              <tr key={i}><th /><Cell $k="note" /><Cell $k="note" /><Cell $k="note" /><Cell $k={i === 3 ? "note2" : "note"}>{t}</Cell></tr>
            ))}
            {cycles.map(([n, a, b, c, d]) => (
              <tr key={d}>
                <th>{n}</th><Cell $k="plain">{a}</Cell><Cell $k="plain">{b}</Cell><Cell $k="plain">{c}</Cell>
                <Inset $k="plain">{d}</Inset>
              </tr>
            ))}
          </tbody>
        </Sheet>
      </Grid>
      <VScroll><Chevron d="u" /><i /><Chevron d="d" /></VScroll>
    </Client>
    <Footer tab="Sheet1" scroll={65} thumb={34} />
  </Win>
);

const menus = "File Edit View Data Plot Column Worksheet Format Analysis Statistics Image Tools Preferences Connectivity Window Help".split(" ");

export default function App() {
  return (
    <Frame>
      <Global />
      <TitleBar>
        <svg width="10" height="10" viewBox="0 0 10 10" aria-hidden="true">
          <circle cx="5" cy="5" r="4.500" fill="#d4553a" />
          <path d="M2 2q4-2 6 2M1.500 7q5 3 7-2" stroke="#f4b9a3" fill="none" />
          <path d="M3 4h4v3H3z" fill="#8c2f20" />
        </svg>
        <h1>SingleLayerMultiY.opju - C:\Users\noho\Desktop\Website\2023\HighlightsPage\ - /1. Line Symbol/ &lt;+1&gt; - OriginPro 2023</h1>
        <div>
          {["M3 6.500h6", "M3 3.500h6v6H3z", "M3 3l6 6M9 3L3 9"].map((d, i) => (
            <button key={d} type="button" aria-label={["Minimize", "Restore", "Close"][i]}>
              <svg width="12" height="12" viewBox="0 0 12 12"><path d={d} fill="none" stroke="#333" /></svg>
            </button>
          ))}
        </div>
      </TitleBar>
      <MenuBar><MenuGrip />{menus.map(m => <button key={m} type="button">{m}</button>)}</MenuBar>
      <ToolRow>
        <Bar w={507}>
          <Tools list="new folder sheet graph matrix wave> layout notes pen check | open cloud save saveAs | run stop |" />
          <Select w={34} value="100%" label="Zoom" />
          <Tools list="| print slide magenta film | edit split splitG | tree | zoomPg* zoomGr* cal calPen gear | addCol" />
        </Bar>
        <Bar w={166} list="sumCol sum sort | abc | bars bars2 bars3 | funnel funnelX funnelR" />
        <Bar w={93} list="plusM | X Yl* Z i |" />
        <Bar w={25} />
      </ToolRow>
      <ToolRow>
        <Bar w={120} list="back fwd sortX | ptA ptB | prn2 pin" />
        <Bar w={152} list="tabA tabB | tabC tabD tabE | stack | out globe pages" />
        <Bar w={55} list="cut copy paste" />
        <Bar w={317}>
          <Select w={76} value="Default: Arial" label="Font" icon={
            <svg width="10" height="9" viewBox="0 0 10 9"><path d="M0 1h6M3 1v7M5 4h4.500M7 3v6" stroke="#333" strokeWidth="1.600" /></svg>
          } />
          <Select w={35} value="9" label="Font size" />
          <Tools list="bold italic under sup sub both greek bigA smallA align> vlines> fontA>" />
        </Bar>
        <Bar w={147}>
          <Tools list="bucket> shade> pencil> burst" />
          <Combo $w={34}>
            <svg width="22" height="8"><path d="M1 4.500h20" stroke="#222" /></svg><Caret w={4} />
          </Combo>
          <Tools list="table" />
        </Bar>
      </ToolRow>
      <Body>
        <SideTabs>
          <SideTab type="button" $red>Messages Log (1)</SideTab>
          <SideTab type="button">Smart Hint Log</SideTab>
        </SideTabs>
        <ToolColumn $w={21} $h={274} role="toolbar">
          <Grip $flat />
          <ColumnItems $n={1}>
            <Tools list="pointer* zin zout cross target> updn blob> curve> dots T region> arrow> lineT> rect> hand pic> picR> handG cube" />
          </ColumnItems>
          <ColumnEnd type="button" aria-label="More"><Dots /></ColumnEnd>
        </ToolColumn>
        <Middle>
          <Workspace>
            <Dock $w={89}>
              <DockHead><h2>Project Explor...</h2><HeadTools /></DockHead>
              <Pane $h={96}>
                <Tree>
                  <Leaf><FolderIcon /><LeafName type="button">SingleLayerMultiY</LeafName></Leaf>
                  <Leaf $in><FolderIcon open /><LeafName type="button" $sel>1. Line Symbol</LeafName></Leaf>
                  <Leaf $in><FolderIcon /><LeafName type="button">2. LineSeries</LeafName></Leaf>
                  <Leaf $in><FolderIcon /><LeafName type="button">3. Box Plot</LeafName></Leaf>
                </Tree>
              </Pane>
              <Pane>
                <Files>
                  <colgroup><col width="59" /><col /></colgroup>
                  <thead><tr><th>Name<SortMark>▴</SortMark></th><th>Size</th></tr></thead>
                  <tbody>
                    <FileRow><td><BookIcon />Book2</td><td>15KB</td></FileRow>
                    <FileRow $bold><td><BookIcon edge="#d43bb0" />S15-125-...</td><td>88KB</td></FileRow>
                    <Filler><td /><td /></Filler>
                  </tbody>
                </Files>
                <HScroll $thumb={32}><Chevron d="l" /><i /><Chevron d="r" /></HScroll>
              </Pane>
            </Dock>
            <Desktop>
              <BackBook />
              <FrontBook />
              <Feedback href="#feedback">&gt;&gt;Feedback</Feedback>
            </Desktop>
            <Dock $w={167} $right>
              <DockHead><h2>Object Manager</h2><HeadTools /></DockHead>
              <Pane>
                <Tree>
                  <Leaf>
                    <svg width="6" height="6" viewBox="0 0 6 6"><path d="M.500.500h5v5h-5zM1.500 3h3" fill="none" stroke="#aaa" /></svg>
                    <FolderIcon open /><LeafName type="button">Book1</LeafName>
                  </Leaf>
                </Tree>
                <Selected type="button">S15-125-03</Selected>
              </Pane>
            </Dock>
          </Workspace>
          <ToolRow>
            <Bar w={201} list="thin> scatter> lineSym> redBar> scMat> box> area> polar> candle> tmpl" />
            <Bar w={130} list="cube3> surf> wire> heat> heat2> img" />
            <Bar w={104} list="mask maskG | shield nodes nodes | redLines" />
            <Spacer />
            <Bar w={203}>
              <Tools list="al1 al2 al3 al4 trap trap2 cabinet over fit front cube" />
              <Select w={35} value="10" label="Size" dim />
            </Bar>
          </ToolRow>
        </Middle>
        <ToolColumn $w={16} role="toolbar">
          <Grip $flat />
          <ColumnItems $n={228}>
            <Tools flat list="layers* ax1 ax2 ax3 swap speed* | frame four fourK mix | L Lt U sq inner inner" />
          </ColumnItems>
          <ColumnEnd type="button" aria-label="More"><Dots /></ColumnEnd>
          <Grip $flat />
          <ColumnItems $n={104}>
            <Tools flat list="g1 g2 | g3 g4 | g5 g6 | g2" />
          </ColumnItems>
          <ColumnEnd type="button" aria-label="More"><Dots /></ColumnEnd>
        </ToolColumn>
        <SideTabs $right><SideTab type="button">Apps</SideTab></SideTabs>
      </Body>
      <StatusBar>
        <span>Average=68.0941 Sum=6809.41 Count=100</span>
        <Sep />
        <span>AU : ON</span>
        <b />
        <span>(3x1000) 50</span>
        <span>[Book1]S15-125-03!2[1]:3[50]</span>
        <span>Radian</span>
        <SizeGrip />
      </StatusBar>
      <Lens type="button" aria-label="Search">
        <svg width="19" height="18" viewBox="0 0 19 18">
          <circle cx="8" cy="11" r="6.500" fill="#e7a98c" />
          <circle cx="9" cy="7.500" r="5.500" fill="#d9ecfb" stroke="#2f6fd0" strokeWidth="2.400" />
          <path d="M13 12l4 4" stroke="#2f6fd0" strokeWidth="2.600" strokeLinecap="round" />
        </svg>
      </Lens>
    </Frame>
  );
}
